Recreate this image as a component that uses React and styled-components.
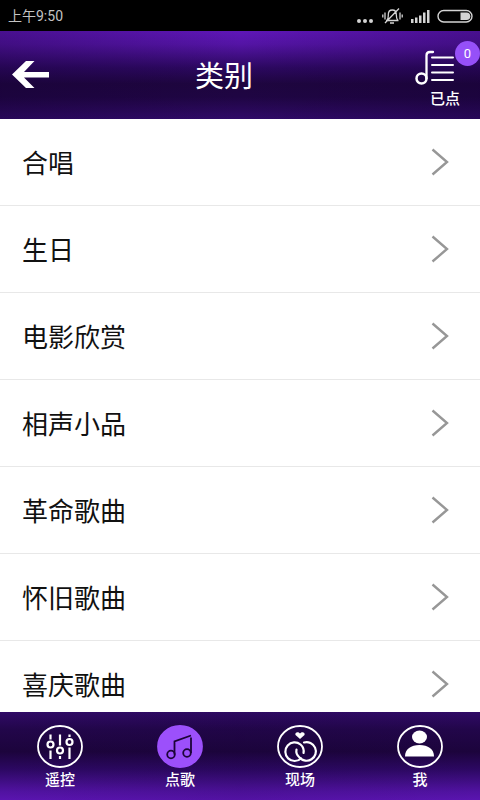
import React from 'react';
import styled, { createGlobalStyle } from 'styled-components';

const categories = ['合唱', '生日', '电影欣赏', '相声小品', '革命歌曲', '怀旧歌曲', '喜庆歌曲'];

const App = () => (
  <Page>
    <GlobalStyle />
    <StatusBar>
      <span>上午9:50</span>
      <StatusIcons />
    </StatusBar>
    <Header>
      <BackButton type="button" aria-label="返回">
        <svg width="38" height="30" viewBox="0 0 38 30" fill="#fff">
          <path d="M0 14.500 14 1h8.500L12 12h25v5.500H12L22.500 28H14z" />
        </svg>
      </BackButton>
      <Title>类别</Title>
      <PickedButton type="button">
        <PlaylistIcon />
        <PickedLabel>已点</PickedLabel>
        <Badge>0</Badge>
      </PickedButton>
    </Header>
    <List>
      {categories.map(name => (
        <Item key={name}>
          <ItemLink href="#">
            <ItemName>{name}</ItemName>
            <Chevron />
          </ItemLink>
        </Item>
      ))}
    </List>
    <TabBar>
      <Tab href="#">
        <RemoteIcon />
        遥控
      </Tab>
      <Tab href="#" aria-current="page">
        <SongIcon />
        点歌
      </Tab>
      <Tab href="#">
        <LiveIcon />
        现场
      </Tab>
      <Tab href="#">
        <MeIcon />
        我
      </Tab>
    </TabBar>
  </Page>
);

export default App;

const StatusIcons = () => (
  <svg width="118" height="20" viewBox="0 0 118 20" fill="#d4d4d4">
    <circle cx="3" cy="15" r="2" />
    <circle cx="9" cy="15" r="2" />
    <circle cx="15" cy="15" r="2" />
    <g fill="none" stroke="#d4d4d4" strokeWidth="1.3">
      <path d="M30 14.500h12.500M31 14.500c1.500-2 1.300-3.500 1.300-6 0-2.500 1.500-4.500 4-4.500s4 2 4 4.500c0 2.500 0 4 1.500 6M34 17h4M29 17 43 2.500" />
      <path d="M29 6.500v7M26.800 8.500v3M44 6.500v7M46.200 8.500v3" />
    </g>
    <path d="M55 13h2.500v4H55zM59 11.500h2.500V17H59zM63 9.500h2.500V17H63zM67 6.500h2.500V17H67zM71 4h2.500v13H71z" />
    <rect x="82" y="4.500" width="34" height="11.500" rx="5.700" fill="none" stroke="#d4d4d4" strokeWidth="1.400" />
    <path d="M104.500 6.500h6a3.800 3.800 0 0 1 0 7.600h-6z" />
  </svg>
);

const PlaylistIcon = () => (
  <svg width="40" height="36" viewBox="0 0 40 36" fill="none" stroke="#fff" strokeLinecap="round">
    <circle cx="6.500" cy="28.500" r="5" strokeWidth="2.500" />
    <path d="M11.500 28.500V5.500Q11.500 2 15 2h3" strokeWidth="2.300" />
    <path d="M17 7.500h21M17 15h21M17 22.500h21M17 30h21" strokeWidth="2" />
  </svg>
);

const Chevron = () => (
  <svg width="18" height="28" viewBox="0 0 18 28" fill="none" stroke="#979797" strokeWidth="2.400">
    <path d="M1.500 1.500 16 14 1.500 26.500" />
  </svg>
);

const RemoteIcon = () => (
  <TabIcon viewBox="0 0 46 43">
    <ellipse cx="23" cy="21.500" rx="22" ry="20.500" />
    <g strokeWidth="2.200">
      <circle cx="13.500" cy="19.500" r="3" />
      <circle cx="23" cy="25.500" r="3" />
      <circle cx="32.500" cy="17" r="3" />
      <path d="M13.500 9.500v5M13.500 25.500v8.500M23 9.500v11M23 31v3M32.500 9.500v2.500M32.500 22.500v11.500" />
    </g>
  </TabIcon>
);

const SongIcon = () => (
  <TabIcon viewBox="0 0 46 43">
    <ellipse cx="23" cy="21.500" rx="22" ry="20.500" fill="#9c50fb" stroke="#9c50fb" />
    <g stroke="#1c0438">
      <circle cx="14" cy="29.500" r="3.800" />
      <circle cx="30" cy="28" r="3.800" />
      <path d="M17.500 29.500V16.500L34 10.500M34 12.500V28" />
    </g>
  </TabIcon>
);

const LiveIcon = () => (
  <TabIcon viewBox="0 0 46 43">
    <ellipse cx="23" cy="21.500" rx="22" ry="20.500" />
    <g strokeWidth="2.200" strokeLinecap="round">
      <path d="M24 33.500A9.300 9.300 0 1 1 23.500 19.500Q27.500 23 26.500 28" />
      <path d="M27 17.500A9.300 9.300 0 1 1 22.500 32.500Q18.500 29 19.500 24.500" />
    </g>
    <path d="M23 14 18.500 10C17.500 7.500 21 6 23 8.500 25 6 28.500 7.500 27.500 10z" fill="#fff" stroke="none" />
  </TabIcon>
);

const MeIcon = () => (
  <TabIcon viewBox="0 0 46 43">
    <ellipse cx="23" cy="21.500" rx="22" ry="20.500" />
    <ellipse cx="22.500" cy="12" rx="7.500" ry="6.500" fill="#fff" stroke="none" />
    <path d="M8 31.500C8 24 14 20 22.500 20S37 24 37 31.500z" fill="#fff" stroke="none" />
  </TabIcon>
);

const GlobalStyle = createGlobalStyle`
  * {
    box-sizing: border-box;
  }

  body {
    margin: 0;
    background: #fff;
    font-family: Roboto, "Noto Sans CJK SC", sans-serif;
  }
`;

const Page = styled.div`
  display: flex;
  flex-direction: column;
  height: 100vh;
`;

const StatusBar = styled.div`
  flex: none;
  display: flex;
  align-items: center;
  justify-content: space-between;
  height: 31px;
  padding: 0 6px 0 8px;
  background: #000;
  color: #c4c4c4;
  font-size: 14px;
  line-height: 20px;
`;

const Header = styled.header`
  flex: none;
  display: grid;
  grid-template-columns: 1fr auto 1fr;
  align-items: center;
  height: 88px;
  background:
    linear-gradient(90deg, rgba(20, 0, 50, 0.3), transparent 50%, rgba(20, 0, 50, 0.3)),
    linear-gradient(#5f16b8, #5414a5 15%, #2c0860 42%, #1e053f 60%, #1f0543 75%, #300a68);
  color: #fff;
`;

const BackButton = styled.button`
  justify-self: start;
  display: flex;
  padding: 12px;
  border: 0;
  background: none;
`;

const Title = styled.h1`
  margin: 4px 32px 0 0;
  font-size: 29px;
  font-weight: 400;
  line-height: 40px;
`;

const PickedButton = styled.button`
  position: relative;
  justify-self: end;
  width: 65px;
  height: 68px;
  padding: 8px 0 0;
  border: 0;
  background: none;
  color: #fff;
  font-family: inherit;
  text-align: left;
`;

const PickedLabel = styled.span`
  display: block;
  padding-left: 15px;
  font-size: 15px;
  font-weight: 500;
  line-height: 20px;
`;

const Badge = styled.span`
  position: absolute;
  top: 0;
  right: 0;
  width: 25px;
  height: 25px;
  border-radius: 50%;
  background: #9650f8;
  font-size: 13px;
  line-height: 25px;
  text-align: center;
`;

const List = styled.ul`
  flex: 1;
  min-height: 0;
  margin: 0;
  padding: 0;
  overflow: hidden;
  list-style: none;
`;

const Item = styled.li`
  border-bottom: 1px solid #e8e8e8;
`;

const ItemLink = styled.a`
  display: flex;
  align-items: center;
  justify-content: space-between;
  height: 86px;
  padding: 0 31px 0 22px;
  color: #111;
  font-size: 26px;
  text-decoration: none;
`;

const ItemName = styled.span`
  padding-bottom: 2px;
`;

const TabBar = styled.nav`
  flex: none;
  display: flex;
  height: 88px;
  background:
    linear-gradient(90deg, transparent, rgba(20, 0, 50, 0.1) 50%, transparent),
    linear-gradient(#300a66, #22064a 20%, #1c043c 45%, #2c0862 65%, #5012a0 90%, #5a14b0);
`;

const Tab = styled.a`
  flex: 1;
  display: flex;
  flex-direction: column;
  align-items: center;
  padding-top: 13px;
  color: #fff;
  font-size: 15px;
  font-weight: 500;
  line-height: 24px;
  text-decoration: none;
`;

const TabIcon = styled.svg`
  width: 46px;
  height: 43px;
  fill: none;
  stroke: #fff;
  stroke-width: 1.8;
`;
